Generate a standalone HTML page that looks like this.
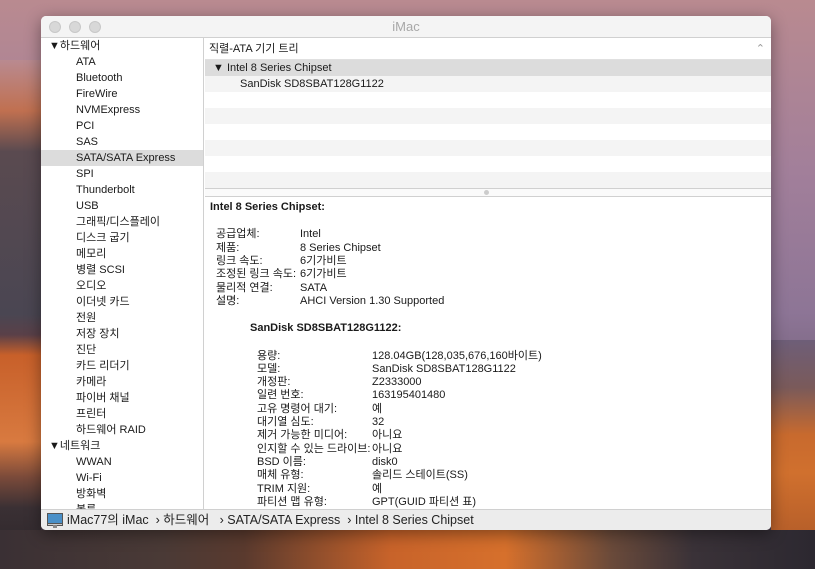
<!DOCTYPE html>
<html><head><meta charset="utf-8"><style>
*{margin:0;padding:0;box-sizing:border-box}
body{width:815px;height:569px;overflow:hidden;position:relative;font-family:"Liberation Sans","Noto Sans CJK KR",sans-serif;font-size:11px;color:#1a1a1a;
background:linear-gradient(180deg,#b98a90 0%,#a27f9a 30%,#8d7596 55%,#6c5a70 75%,#3a3038 100%)}
.bgl{position:absolute;left:0;top:60px;width:41px;height:509px;background:linear-gradient(180deg,#b98a90 0%,#c07050 10%,#5a4a50 18%,#4a4652 50%,#5a4048 54%,#c8602a 58%,#d87a40 75%,#7a4a3a 82%,#3a3034 88%,#2a2428 100%)}
.bgb{position:absolute;left:0;top:530px;width:815px;height:39px;background:linear-gradient(90deg,#3a3034 0%,#4a3a36 20%,#5a3a2e 30%,#c8632a 48%,#d6702c 62%,#6a4a3a 75%,#3a3238 85%,#2c2830 100%)}
.bgr{position:absolute;left:771px;top:340px;width:44px;height:190px;background:linear-gradient(180deg,#6e5e78 0%,#7a5a5a 25%,#c86a2e 50%,#d0702e 70%,#b8602a 100%)}
.win{position:absolute;left:41px;top:16px;width:730px;height:514px;background:#fff;border-radius:5px;overflow:hidden;box-shadow:0 4px 16px rgba(0,0,0,.4)}
.title{height:22px;background:#f4f4f4;border-bottom:1px solid #d0d0d0;text-align:center;line-height:22px;font-size:13px;color:#a8a8a8}
.dot{position:absolute;top:5px;width:12px;height:12px;border-radius:50%;background:#d8d8d8;border:1px solid #c8c8c8}
.side{position:absolute;left:0;top:22px;width:163px;height:471px;background:#fff;border-right:1px solid #d0d0d0;overflow:hidden}
.side div{height:16px;line-height:16px;padding-left:35px;white-space:nowrap}
.side .h{padding-left:8px}
.side .sel{background:#dcdcdc}
.main{position:absolute;left:164px;top:22px;width:566px;height:471px}
.hdr{height:22px;line-height:22px;padding-left:4px;border-bottom:1px solid #e0e0e0;position:relative}
.row{height:16px;line-height:16px;padding-left:8px}
.split{height:9px;border-top:1px solid #d0d0d0;border-bottom:1px solid #d0d0d0;background:#fafafa;position:relative}
.detail{padding:3px 5px;line-height:13.4px}
table{border-collapse:collapse}td{padding:0;line-height:13.3px;white-space:nowrap}
.status{position:absolute;left:0;top:493px;width:730px;height:21px;background:#ececec;border-top:1px solid #d0d0d0;line-height:20px;font-size:12.5px;padding-left:26px;color:#222}
</style></head><body>
<div class="bgl"></div><div class="bgb"></div><div class="bgr"></div>
<div class="win">
<div class="title">iMac</div>
<div class="dot" style="left:8px"></div><div class="dot" style="left:28px"></div><div class="dot" style="left:48px"></div>
<div class="side">
<div class="h">▼하드웨어</div><div>ATA</div><div>Bluetooth</div><div>FireWire</div><div>NVMExpress</div><div>PCI</div><div>SAS</div><div class="sel">SATA/SATA Express</div><div>SPI</div><div>Thunderbolt</div><div>USB</div><div>그래픽/디스플레이</div><div>디스크 굽기</div><div>메모리</div><div>병렬 SCSI</div><div>오디오</div><div>이더넷 카드</div><div>전원</div><div>저장 장치</div><div>진단</div><div>카드 리더기</div><div>카메라</div><div>파이버 채널</div><div>프린터</div><div>하드웨어 RAID</div><div class="h">▼네트워크</div><div>WWAN</div><div>Wi-Fi</div><div>방화벽</div><div>볼륨</div>
</div>
<div class="main">
<div class="hdr">직렬-ATA 기기 트리<span style="position:absolute;right:6px;top:0;color:#999">⌃</span></div>
<div>
<div class="row" style="background:#dcdcdc">▼ Intel 8 Series Chipset</div>
<div class="row" style="padding-left:35px;background:#f4f4f4">SanDisk SD8SBAT128G1122</div>
<div class="row" style="background:#fff"></div><div class="row" style="background:#f4f4f4"></div><div class="row" style="background:#fff"></div><div class="row" style="background:#f4f4f4"></div><div class="row" style="background:#fff"></div><div class="row" style="background:#f4f4f4"></div>
</div>
<div class="split"><span style="position:absolute;left:279px;top:1px;width:5px;height:5px;border-radius:50%;background:#ccc"></span></div>
<div class="detail">
<div style="font-weight:bold;margin-bottom:14px;margin-top:1px">Intel 8 Series Chipset:</div>
<table style="margin-left:6px"><tr><td style="width:84px">공급업체:</td><td>Intel</td></tr><tr><td>제품:</td><td>8 Series Chipset</td></tr><tr><td>링크 속도:</td><td>6기가비트</td></tr><tr><td>조정된 링크 속도:</td><td>6기가비트</td></tr><tr><td>물리적 연결:</td><td>SATA</td></tr><tr><td>설명:</td><td>AHCI Version 1.30 Supported</td></tr></table>
<div style="font-weight:bold;margin:14px 0 14px 40px">SanDisk SD8SBAT128G1122:</div>
<table style="margin-left:47px"><tr><td style="width:115px">용량:</td><td>128.04GB(128,035,676,160바이트)</td></tr><tr><td>모델:</td><td>SanDisk SD8SBAT128G1122</td></tr><tr><td>개정판:</td><td>Z2333000</td></tr><tr><td>일련 번호:</td><td>163195401480</td></tr><tr><td>고유 명령어 대기:</td><td>예</td></tr><tr><td>대기열 심도:</td><td>32</td></tr><tr><td>제거 가능한 미디어:</td><td>아니요</td></tr><tr><td>인지할 수 있는 드라이브:</td><td>아니요</td></tr><tr><td>BSD 이름:</td><td>disk0</td></tr><tr><td>매체 유형:</td><td>솔리드 스테이트(SS)</td></tr><tr><td>TRIM 지원:</td><td>예</td></tr><tr><td>파티션 맵 유형:</td><td>GPT(GUID 파티션 표)</td></tr></table>
</div>
</div>
<div class="status"><svg style="position:absolute;left:6px;top:3px" width="16" height="15"><rect x="0.5" y="0.5" width="15" height="10" fill="#4a90c8" stroke="#555"/><rect x="0.5" y="10.5" width="15" height="2" fill="#ccc" stroke="#555"/><rect x="6" y="12" width="4" height="3" fill="#888"/></svg>iMac77의 iMac &nbsp;›&nbsp;하드웨어 &nbsp;&nbsp;›&nbsp;SATA/SATA Express &nbsp;›&nbsp;Intel 8 Series Chipset</div>
</div>
</body></html>
